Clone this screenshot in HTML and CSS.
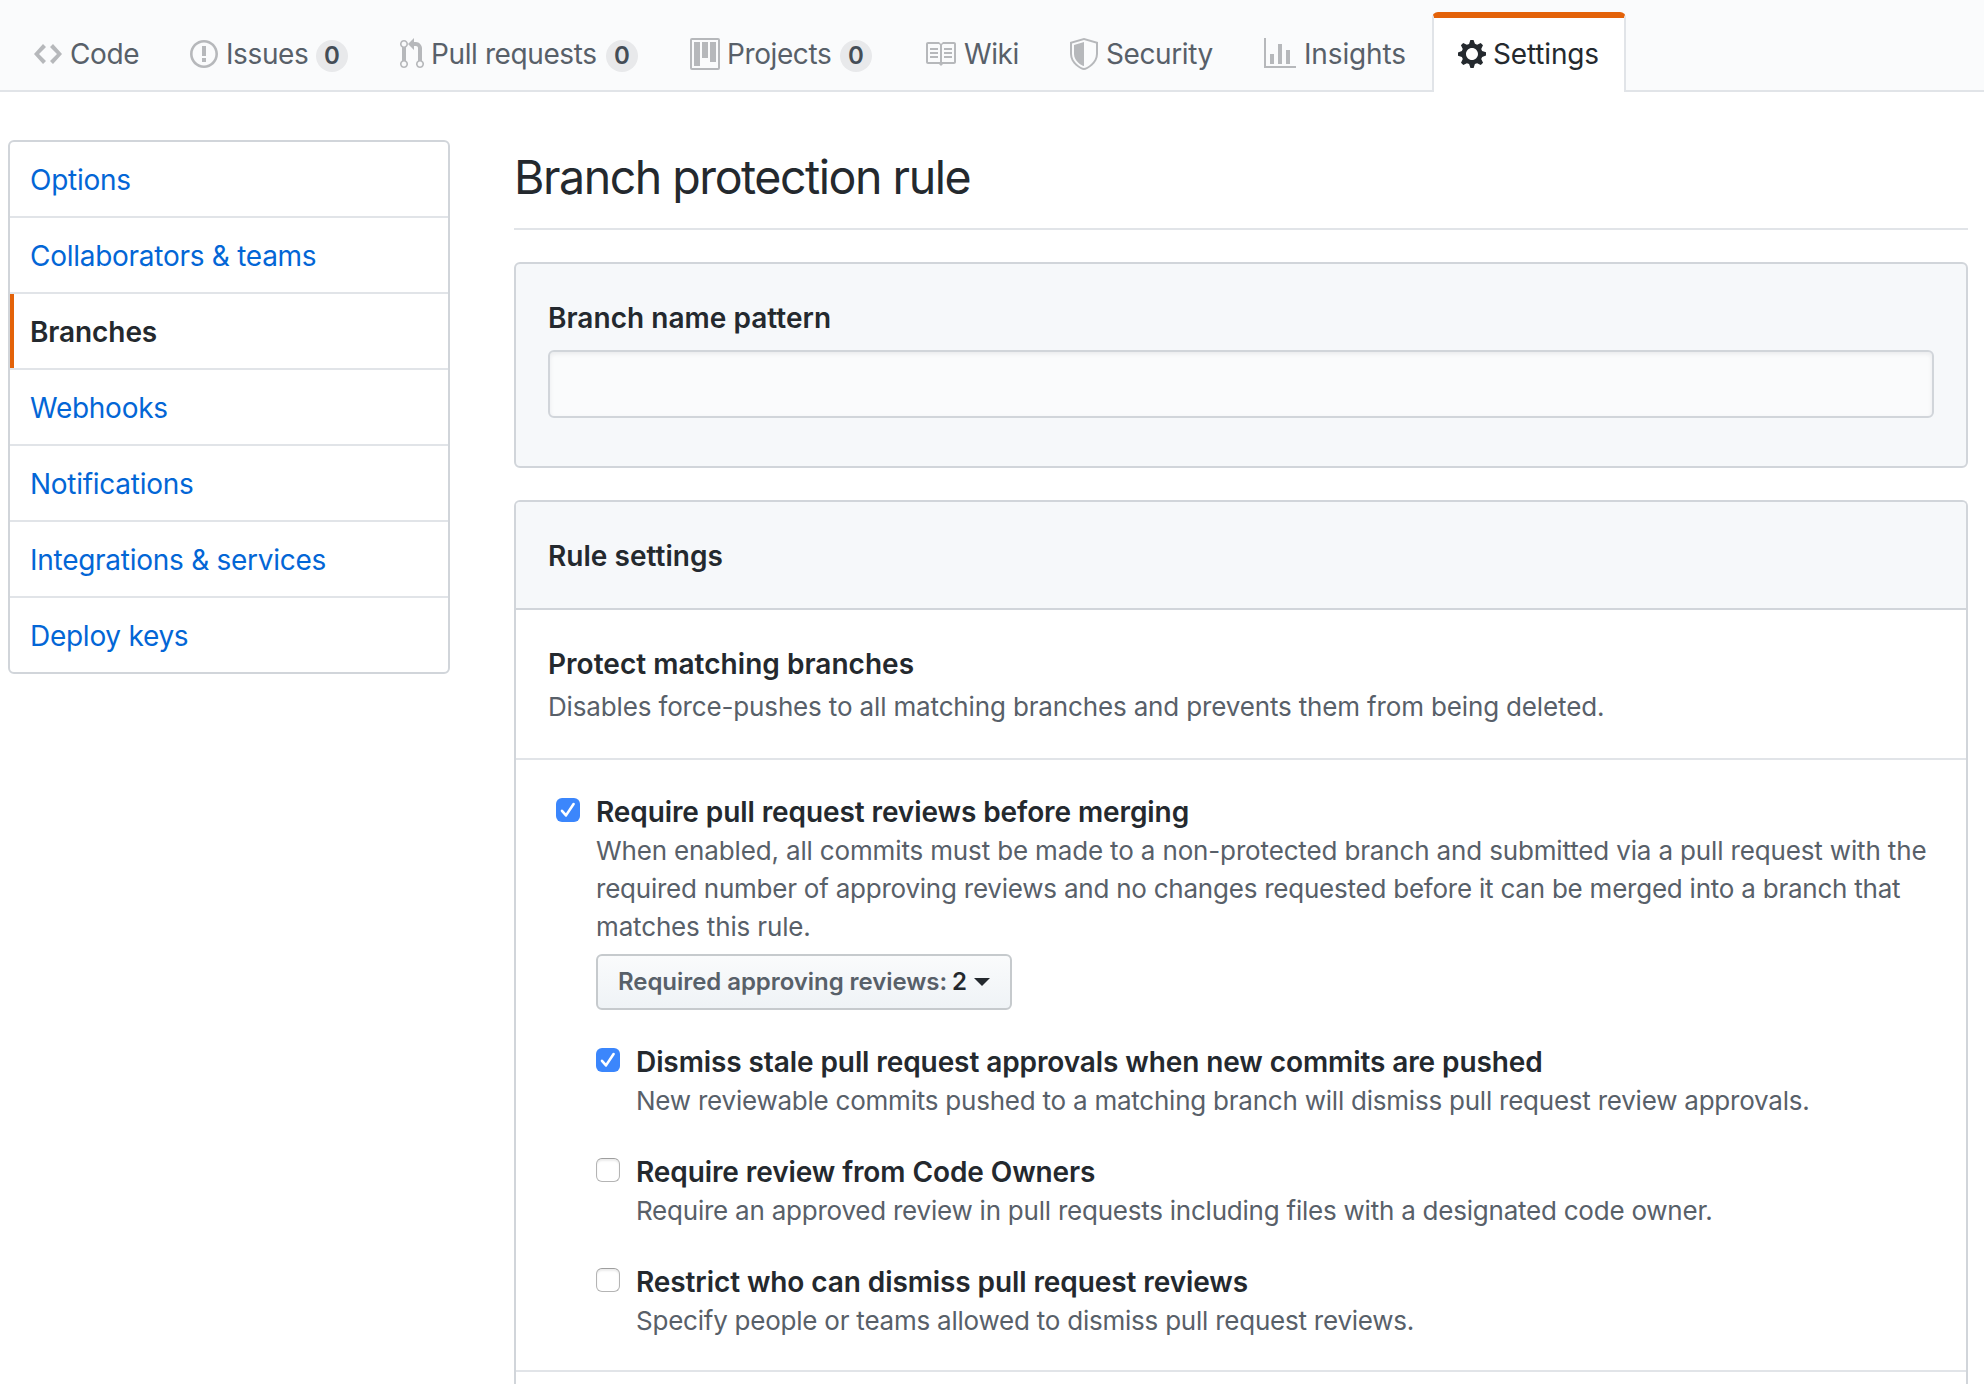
FILE: index.html
```html
<!DOCTYPE html>
<html lang="en">
<head>
<meta charset="utf-8">
<title>Branch protection rule</title>
<link rel="stylesheet" href="styles.css">
</head>
<body>
<nav class="tabs">
  <a class="tab tab-code"><svg class="icon" width="28" height="32" viewBox="0 0 14 16"><path d="M9.5 3L8 4.5 11.5 8 8 11.5 9.5 13 14 8 9.5 3zm-5 0L0 8l4.5 5L6 11.5 2.5 8 6 4.5 4.5 3z"/></svg><span class="label">Code</span></a>
  <a class="tab tab-issues"><svg class="icon" width="28" height="32" viewBox="0 0 14 16"><path d="M7 2.3c3.14 0 5.7 2.56 5.7 5.7s-2.56 5.7-5.7 5.7A5.71 5.71 0 0 1 1.3 8c0-3.14 2.56-5.7 5.7-5.7zM7 1C3.14 1 0 4.14 0 8s3.14 7 7 7 7-3.14 7-7-3.14-7-7-7zm1 3H6v5h2V4zm0 6H6v2h2v-2z"/></svg><span class="label">Issues</span><span class="counter">0</span></a>
  <a class="tab tab-pulls"><svg class="icon" width="24" height="32" viewBox="0 0 12 16"><path d="M11 11.28V5c-.03-.78-.34-1.47-.94-2.06C9.46 2.35 8.78 2.03 8 2H7V0L4 3l3 3V4h1c.27.02.48.11.69.31.21.2.3.42.31.69v6.28A1.993 1.993 0 0 0 10 15a1.993 1.993 0 0 0 1-3.72zm-1 2.92c-.66 0-1.2-.55-1.2-1.2 0-.65.55-1.2 1.2-1.2.65 0 1.2.55 1.2 1.2 0 .65-.55 1.2-1.2 1.2zM4 3c0-1.11-.89-2-2-2a1.993 1.993 0 0 0-1 3.72v6.56A1.993 1.993 0 0 0 2 15a1.993 1.993 0 0 0 1-3.72V4.72c.59-.34 1-.98 1-1.72zm-.8 10c0 .66-.55 1.2-1.2 1.2-.65 0-1.2-.55-1.2-1.2 0-.65.55-1.2 1.2-1.2.65 0 1.2.55 1.2 1.2zM2 4.2C1.34 4.2.8 3.65.8 3c0-.65.55-1.2 1.2-1.2.65 0 1.2.55 1.2 1.2 0 .65-.55 1.2-1.2 1.2z"/></svg><span class="label">Pull requests</span><span class="counter">0</span></a>
  <a class="tab tab-projects"><svg class="icon" width="30" height="32" viewBox="0 0 15 16"><path fill-rule="evenodd" d="M10 12h3V2h-3v10zm-4-2h3V2H6v8zm-4 4h3V2H2v12zm-1 1h13V1H1v14zM14 0H1a1 1 0 0 0-1 1v14a1 1 0 0 0 1 1h13a1 1 0 0 0 1-1V1a1 1 0 0 0-1-1z"/></svg><span class="label">Projects</span><span class="counter">0</span></a>
  <a class="tab tab-wiki"><svg class="icon" width="32" height="32" viewBox="0 0 16 16"><path d="M3 5h4v1H3V5zm0 3h4V7H3v1zm0 2h4V9H3v1zm11-5h-4v1h4V5zm0 2h-4v1h4V7zm0 2h-4v1h4V9zm2-6v9c0 .55-.45 1-1 1H9.5l-1 1-1-1H2c-.55 0-1-.45-1-1V3c0-.55.45-1 1-1h5.5l1 1 1-1H15c.55 0 1 .45 1 1zm-8 .5L7.5 3H2v9h6V3.5zm7-.5H9.5l-.5.5V12h6V3z"/></svg><span class="label">Wiki</span></a>
  <a class="tab tab-security"><svg class="icon" width="28" height="32" viewBox="0 0 14 16"><path fill-rule="evenodd" d="M0 2l7-2 7 2v6.02C14 12.69 8.69 16 7 16c-1.69 0-7-3.31-7-7.98V2zm1 .75L7 1l6 1.75v5.268C13 12.104 8.449 15 7 15c-1.449 0-6-2.896-6-6.982V2.75zm1 .75L7 2v12c-1.207 0-5-2.482-5-5.985V3.5z"/></svg><span class="label">Security</span></a>
  <a class="tab tab-insights"><svg class="icon" width="32" height="32" viewBox="0 0 16 16"><path d="M16 14v1H0V0h1v14h15zM5 13H3V8h2v5zm4 0H7V3h2v10zm4 0h-2V6h2v7z"/></svg><span class="label">Insights</span></a>
  <a class="tab tab-settings selected"><svg class="icon" width="28" height="32" viewBox="0 0 14 16"><path fill-rule="evenodd" d="M14 8.77v-1.6l-1.94-.64-.45-1.09.88-1.84-1.13-1.13-1.81.91-1.09-.45-.69-1.92h-1.6l-.63 1.94-1.11.45-1.84-.88-1.13 1.13.91 1.81-.45 1.09L0 7.23v1.59l1.94.64.45 1.09-.88 1.84 1.13 1.13 1.81-.91 1.09.45.69 1.92h1.59l.63-1.94 1.11-.45 1.84.88 1.13-1.13-.92-1.81.47-1.09L14 8.75v.02zM7 11c-1.66 0-3-1.34-3-3s1.34-3 3-3 3 1.34 3 3-1.34 3-3 3z"/></svg><span class="label">Settings</span></a>
</nav>

<div class="page">
  <aside class="menu">
    <a class="menu-item">Options</a>
    <a class="menu-item">Collaborators &amp; teams</a>
    <a class="menu-item current">Branches</a>
    <a class="menu-item">Webhooks</a>
    <a class="menu-item">Notifications</a>
    <a class="menu-item">Integrations &amp; services</a>
    <a class="menu-item">Deploy keys</a>
  </aside>

  <main class="content">
    <h1 class="title">Branch protection rule</h1>

    <section class="box pattern">
      <label class="heading" for="pattern">Branch name pattern</label>
      <input class="pattern-input" id="pattern" type="text">
    </section>

    <section class="box rules">
      <header class="rules-header heading">Rule settings</header>
      <div class="row protect">
        <div class="heading">Protect matching branches</div>
        <p class="note">Disables force-pushes to all matching branches and prevents them from being deleted.</p>
      </div>
      <div class="row reviews">
        <div class="option">
          <span class="check checked"><svg width="24" height="24" viewBox="0 0 24 24"><path d="M6 12.8l4 4.6L17.6 6"/></svg></span>
          <div class="option-body">
            <div class="option-title">Require pull request reviews before merging</div>
            <p class="note">When enabled, all commits must be made to a non-protected branch and submitted via a pull request with the<br><span class="tight">required number of approving reviews and no changes requested before it can be merged into a branch that</span><br>matches this rule.</p>
            <button class="select" type="button"><span class="select-label">Required approving reviews:</span> <span>2</span><span class="caret"></span></button>
            <div class="option nested">
              <span class="check checked"><svg width="24" height="24" viewBox="0 0 24 24"><path d="M6 12.8l4 4.6L17.6 6"/></svg></span>
              <div class="option-body">
                <div class="option-title">Dismiss stale pull request approvals when new commits are pushed</div>
                <p class="note tight">New reviewable commits pushed to a matching branch will dismiss pull request review approvals.</p>
              </div>
            </div>
            <div class="option nested">
              <span class="check"></span>
              <div class="option-body">
                <div class="option-title">Require review from Code Owners</div>
                <p class="note tight">Require an approved review in pull requests including files with a designated code owner.</p>
              </div>
            </div>
            <div class="option nested">
              <span class="check"></span>
              <div class="option-body">
                <div class="option-title">Restrict who can dismiss pull request reviews</div>
                <p class="note tight">Specify people or teams allowed to dismiss pull request reviews.</p>
              </div>
            </div>
          </div>
        </div>
      </div>
    </section>
  </main>
</div>
</body>
</html>
```
FILE: styles.css
```css
* { box-sizing: border-box; }

body {
  margin: 0;
  height: 1384px;
  overflow: hidden;
  display: flex;
  flex-direction: column;
  background: #fff;
  color: #24292e;
  font: 28px/42px Inter, "Liberation Sans", sans-serif;
}

p, h1 { margin: 0; }

/* Repository tabs */
.tabs {
  display: flex;
  flex: none;
  align-items: flex-end;
  gap: 4px;
  height: 92px;
  padding-left: 10px;
  background: #fafbfc;
  box-shadow: inset 0 -2px #e1e4e8;
}

.tab {
  display: flex;
  flex: none;
  height: 80px;
  padding: 20px 22px 0;
  border: 2px solid transparent;
  border-top-width: 6px;
  border-bottom: 0;
  border-radius: 6px 6px 0 0;
  color: #586069;
  white-space: nowrap;
}

.tab-code { width: 152px; }
.tab-issues { width: 206px; }
.tab-pulls { width: 286px; }
.tab-projects { width: 230px; }
.tab-wiki { width: 142px; }
.tab-security { width: 190px; }
.tab-insights { width: 188px; }
.tab-settings { width: 194px; padding-left: 24px; }

.icon {
  flex: none;
  margin-right: 8px;
  fill: rgba(27, 31, 35, .3);
}

.label { margin-top: -5px; letter-spacing: -.4px; }

.tab-pulls .icon,
.tab-projects .icon,
.tab-settings .icon { margin-right: 7px; }

.tab-insights .label,
.tab-settings .label { letter-spacing: -.15px; }

.counter {
  width: 32px;
  height: 32px;
  margin: 2px 0 0 auto;
  border-radius: 16px;
  background: rgba(27, 31, 35, .08);
  color: #444d56;
  font-size: 24px;
  font-weight: 600;
  line-height: 32px;
  text-align: center;
}

.selected {
  background: #fff;
  border-color: #e36209 #e1e4e8 transparent;
  color: #24292e;
}

.selected .icon { fill: currentColor; }

/* Two-column page */
.page {
  display: flex;
  flex: 1;
  min-height: 0;
  align-items: flex-start;
  gap: 64px;
  padding: 48px 16px 0 8px;
}

.menu {
  flex: none;
  width: 442px;
  border: 2px solid #d1d5da;
  border-radius: 6px;
  overflow: hidden;
}

.menu-item {
  display: block;
  height: 76px;
  padding: 17px 20px 0;
  border-bottom: 2px solid #e1e4e8;
  color: #0366d6;
  letter-spacing: -.27px;
}

.menu-item:last-child { height: 74px; border-bottom: 0; }

.current {
  box-shadow: inset 4px 0 #e36209;
  color: #24292e;
  font-weight: 600;
  letter-spacing: -.1px;
}

.content { flex: 1; min-width: 0; }

.title {
  height: 90px;
  padding-top: 1px;
  border-bottom: 2px solid #e1e4e8;
  font-size: 46.5px;
  font-weight: 400;
  letter-spacing: -1.47px;
  line-height: 72px;
}

.box {
  margin-top: 32px;
  border: 2px solid #d1d5da;
  border-radius: 6px;
}

.heading { font-weight: 600; letter-spacing: .03px; }

.pattern {
  display: flex;
  flex-direction: column;
  gap: 11px;
  padding: 33px 32px 48px;
  background: #f6f8fa;
}

.pattern-input {
  width: 100%;
  height: 68px;
  border: 2px solid #d1d5da;
  border-radius: 6px;
  background: #fafbfc;
  box-shadow: inset 0 2px 4px rgba(27, 31, 35, .075);
}

.rules {
  height: 884px;
  border-bottom: 0;
  border-radius: 6px 6px 0 0;
}

.rules-header {
  height: 108px;
  padding: 33px 32px 0;
  border-bottom: 2px solid #d1d5da;
  border-radius: 4px 4px 0 0;
  background: #f6f8fa;
}

.row { border-bottom: 2px solid #e1e4e8; }

.protect { padding: 33px 32px 32px; }
.protect .note { margin-top: 3px; }

.note {
  color: #586069;
  font-size: 26px;
  letter-spacing: -.15px;
  line-height: 38px;
  white-space: nowrap;
}

.tight { letter-spacing: -.23px; }

.reviews { padding: 32px 0 30px 40px; }

.option { display: flex; gap: 16px; }
.option-body { flex: 1; min-width: 0; }

.option-title {
  font-weight: 600;
  letter-spacing: -.09px;
  line-height: 40px;
  white-space: nowrap;
}

.nested { margin-top: 32px; }

.check {
  flex: none;
  width: 24px;
  height: 24px;
  margin-top: 6px;
  border: 1px solid #b4b4b4;
  border-top-color: #9e9e9e;
  border-radius: 6px;
  background: #fff;
  box-shadow: inset 0 2px 2px rgba(0, 0, 0, .08);
}

.checked {
  border: 0;
  background: #3b86fc;
  box-shadow: none;
}

.check svg { display: block; }

.check path {
  fill: none;
  stroke: #fff;
  stroke-width: 2.6;
  stroke-linecap: round;
  stroke-linejoin: round;
}

.select {
  display: flex;
  align-items: center;
  width: 416px;
  height: 56px;
  margin: 8px 0 0;
  padding: 0 20px;
  border: 2px solid #c6cacd;
  border-radius: 6px;
  background: linear-gradient(#fafbfc, #eff3f6);
  color: #24292e;
  font: 600 24px/36px Inter, "Liberation Sans", sans-serif;
  white-space: nowrap;
}

.select-label {
  margin-right: 5px;
  color: #586069;
  letter-spacing: -.06px;
}

.caret {
  margin-left: 7px;
  border: 8px solid transparent;
  border-top-color: currentColor;
  border-bottom: 0;
}
```
